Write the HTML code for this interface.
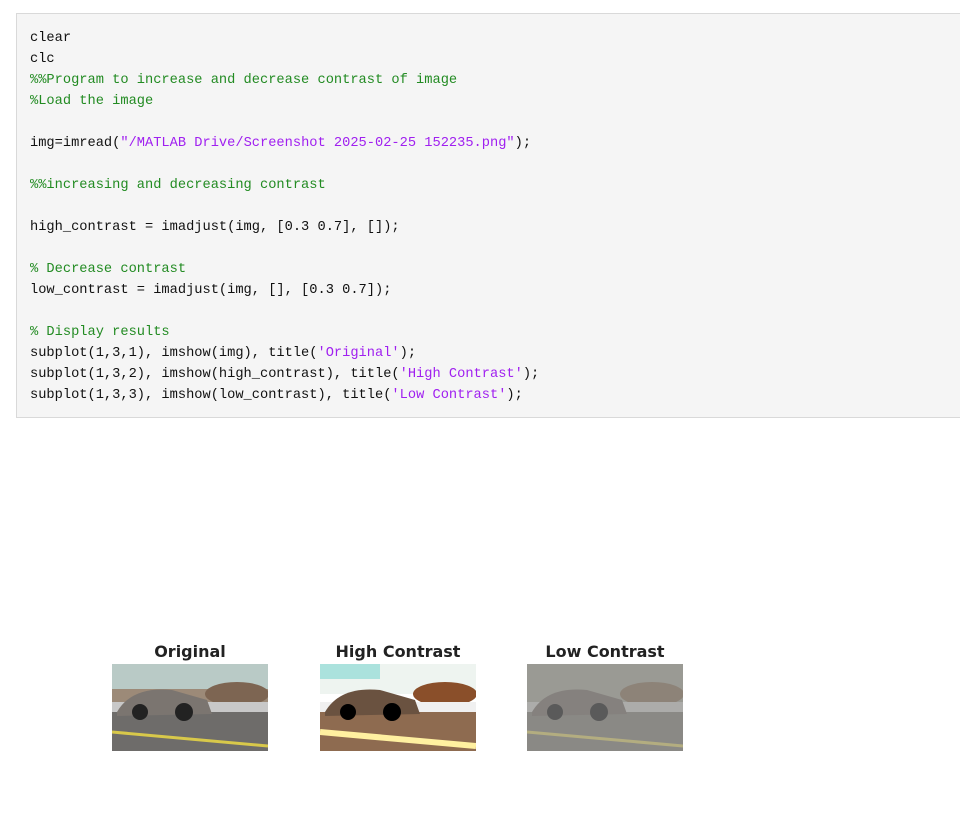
<!DOCTYPE html>
<html><head><style>
body{margin:0;background:#fff;width:960px;height:822px;overflow:hidden;position:relative;font-family:"Liberation Sans",sans-serif}
.code{position:absolute;left:16px;top:13px;width:960px;height:405px;background:#f5f5f5;border:1px solid #d9d9d9;box-sizing:border-box}
pre{margin:0;position:absolute;left:13px;top:14px;font-family:"Liberation Mono",monospace;font-size:13.7px;line-height:21px;color:#111}
.c{color:#228b22}.s{color:#a020f0}
.t{position:absolute;top:642px;font-weight:bold;color:#222;text-align:center;width:156px;font-family:"DejaVu Sans",sans-serif;font-size:16px}
svg{position:absolute;top:664px}
</style></head><body>
<div class="code"><pre>clear
clc
<span class="c">%%Program to increase and decrease contrast of image</span>
<span class="c">%Load the image</span>

img=imread(<span class="s">"/MATLAB Drive/Screenshot 2025-02-25 152235.png"</span>);

<span class="c">%%increasing and decreasing contrast</span>

high_contrast = imadjust(img, [0.3 0.7], []);

<span class="c">% Decrease contrast</span>
low_contrast = imadjust(img, [], [0.3 0.7]);

<span class="c">% Display results</span>
subplot(1,3,1), imshow(img), title(<span class="s">'Original'</span>);
subplot(1,3,2), imshow(high_contrast), title(<span class="s">'High Contrast'</span>);
subplot(1,3,3), imshow(low_contrast), title(<span class="s">'Low Contrast'</span>);</pre></div>

<div class="t" style="left:112px">Original</div>
<div class="t" style="left:320px">High Contrast</div>
<div class="t" style="left:527px">Low Contrast</div>

<svg style="left:112px" width="156" height="87"><rect width="156" height="30" fill="#b9cac6"/><rect y="25" width="156" height="20" fill="#9c8a78"/><ellipse cx="125" cy="30" rx="32" ry="12" fill="#7d6552"/><rect y="45" width="156" height="42" fill="#6e6c6a"/><rect y="38" width="156" height="10" fill="#c8c8c8"/><path d="M5 48 Q20 22 60 26 L95 36 L100 50 L5 52Z" fill="#7b7570"/><circle cx="28" cy="48" r="8" fill="#222"/><circle cx="72" cy="48" r="9" fill="#222"/><path d="M0 68 L156 82" stroke="#d8c84a" stroke-width="3"/></svg>
<svg style="left:320px" width="156" height="87"><rect width="156" height="30" fill="#eef4f0"/><rect width="60" height="15" fill="#7fd6d0" opacity=".6"/><ellipse cx="125" cy="30" rx="32" ry="12" fill="#8a4f2a"/><rect y="45" width="156" height="42" fill="#8e6b50"/><rect y="38" width="156" height="10" fill="#f0f0f0"/><path d="M5 48 Q20 22 60 26 L95 36 L100 50 L5 52Z" fill="#6a5240"/><circle cx="28" cy="48" r="8" fill="#000"/><circle cx="72" cy="48" r="9" fill="#000"/><path d="M0 68 L156 82" stroke="#fff0a0" stroke-width="6"/></svg>
<svg style="left:527px" width="156" height="87"><rect width="156" height="87" fill="#9a9a94"/><ellipse cx="125" cy="30" rx="32" ry="12" fill="#8d8378"/><rect y="45" width="156" height="42" fill="#8a8985"/><rect y="38" width="156" height="10" fill="#acacaa"/><path d="M5 48 Q20 22 60 26 L95 36 L100 50 L5 52Z" fill="#85817e"/><circle cx="28" cy="48" r="8" fill="#5a5a5a"/><circle cx="72" cy="48" r="9" fill="#5a5a5a"/><path d="M0 68 L156 82" stroke="#b3ad80" stroke-width="3"/></svg>
</body></html>
